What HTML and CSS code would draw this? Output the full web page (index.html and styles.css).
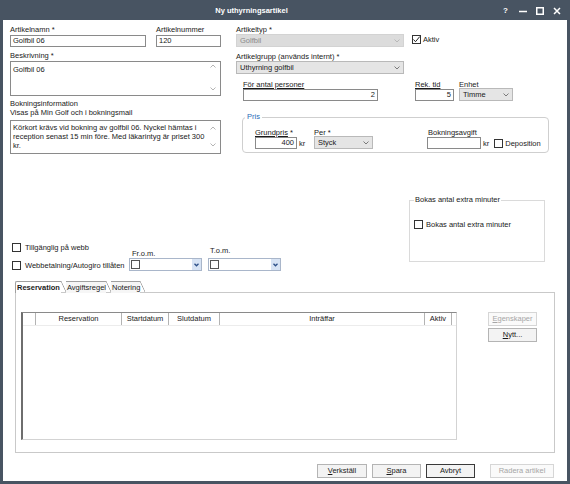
FILE: index.html
```html
<!DOCTYPE html>
<html lang="sv">
<head>
  <meta charset="UTF-8">
  <title>Ny uthyrningsartikel</title>
  <link rel="stylesheet" href="styles.css">
</head>
<body>
<div class="window">
  <div class="titlebar">
    <div class="title">Ny uthyrningsartikel</div>
    <div class="caption">
      <span class="cap cap-help">?</span>
      <span class="cap"><svg width="8" height="8" viewBox="0 0 8 8"><path d="M0 4.5h8"/></svg></span>
      <span class="cap"><svg width="8" height="8" viewBox="0 0 8 8"><rect x="0.75" y="0.75" width="6.5" height="6.5"/></svg></span>
      <span class="cap"><svg width="8" height="8" viewBox="0 0 8 8"><path d="M1 1l6 6M7 1l-6 6"/></svg></span>
    </div>
  </div>

  <div class="frame">
    <div class="top">
      <!-- left column -->
      <div class="col-left">
        <div class="row">
          <div class="field f-name">
            <div class="lbl">Artikelnamn *</div>
            <div class="input">Golfbil 06</div>
          </div>
          <div class="field f-number">
            <div class="lbl">Artikelnummer</div>
            <div class="input">120</div>
          </div>
        </div>
        <div class="field f-desc">
          <div class="lbl">Beskrivning *</div>
          <div class="memo memo-desc">
            <div class="memo-text">Golfbil 06</div>
            <div class="memo-scroll">
              <svg width="6" height="4" viewBox="0 0 6 4"><path d="M0.5 3.5L3 1l2.5 2.5"/></svg>
              <svg width="6" height="4" viewBox="0 0 6 4"><path d="M0.5 0.5L3 3l2.5-2.5"/></svg>
            </div>
          </div>
        </div>
        <div class="info">
          <div>Bokningsinformation</div>
          <div>Visas på Min Golf och i bokningsmail</div>
        </div>
        <div class="memo memo-info">
          <div class="memo-text">Körkort krävs vid bokning av golfbil 06. Nyckel hämtas i<br>reception senast 15 min före. Med läkarintyg är priset 300<br>kr.</div>
          <div class="memo-scroll">
            <svg width="6" height="4" viewBox="0 0 6 4"><path d="M0.5 3.5L3 1l2.5 2.5"/></svg>
            <svg width="6" height="4" viewBox="0 0 6 4"><path d="M0.5 0.5L3 3l2.5-2.5"/></svg>
          </div>
        </div>
      </div>

      <!-- right column -->
      <div class="col-right">
        <div class="row">
          <div class="field f-type">
            <div class="lbl">Artikeltyp *</div>
            <div class="combo disabled">Golfbil<svg width="6" height="4" viewBox="0 0 6 4"><path d="M0.5 0.5L3 3l2.5-2.5"/></svg></div>
          </div>
          <div class="check aktiv">
            <span class="box"><svg width="9" height="9" viewBox="0 0 9 9"><path d="M1.5 4.5l2 2.2L7.8 1.5"/></svg></span>Aktiv
          </div>
        </div>
        <div class="field f-group">
          <div class="lbl">Artikelgrupp (används internt) *</div>
          <div class="combo">Uthyrning golfbil<svg width="6" height="4" viewBox="0 0 6 4"><path d="M0.5 0.5L3 3l2.5-2.5"/></svg></div>
        </div>
        <div class="row persons">
          <div class="field f-count">
            <div class="lbl tight"><u>För antal personer</u></div>
            <div class="input num">2</div>
          </div>
          <div class="field f-rek">
            <div class="lbl tight"><u>Rek. tid</u></div>
            <div class="input num">5</div>
          </div>
          <div class="field f-unit">
            <div class="lbl tight">Enhet</div>
            <div class="combo">Timme<svg width="6" height="4" viewBox="0 0 6 4"><path d="M0.5 0.5L3 3l2.5-2.5"/></svg></div>
          </div>
        </div>
        <fieldset class="pris">
          <legend>Pris</legend>
          <div class="row">
            <div class="field f-base">
              <div class="lbl small"><u>Grundpris</u> *</div>
              <div class="unit-row"><div class="input num">400</div><span class="kr">kr</span></div>
            </div>
            <div class="field f-per">
              <div class="lbl small">Per *</div>
              <div class="combo">Styck<svg width="6" height="4" viewBox="0 0 6 4"><path d="M0.5 0.5L3 3l2.5-2.5"/></svg></div>
            </div>
            <div class="field f-fee">
              <div class="lbl small">Bokningsavgift</div>
              <div class="unit-row">
                <div class="input num"></div><span class="kr">kr</span>
                <div class="check deposit"><span class="box"></span>Deposition</div>
              </div>
            </div>
          </div>
        </fieldset>
      </div>
    </div>

    <div class="middle">
      <div class="web">
        <div class="web-checks">
          <div class="check"><span class="box"></span>Tillgänglig på webb</div>
          <div class="check"><span class="box"></span>Webbetalning/Autogiro tillåten</div>
        </div>
        <div class="date-field">
          <div class="lbl date-from">Fr.o.m.</div>
          <div class="picker"><span class="box"></span><span class="drop"><svg width="5" height="4" viewBox="0 0 5 4"><path d="M0.5 0.8L2.5 2.8l2-2"/></svg></span></div>
        </div>
        <div class="date-field">
          <div class="lbl date-to">T.o.m.</div>
          <div class="picker"><span class="box"></span><span class="drop"><svg width="5" height="4" viewBox="0 0 5 4"><path d="M0.5 0.8L2.5 2.8l2-2"/></svg></span></div>
        </div>
      </div>
      <fieldset class="bokas">
        <legend>Bokas antal extra minuter</legend>
        <div class="check"><span class="box"></span>Bokas antal extra minuter</div>
      </fieldset>
    </div>

    <div class="tabs">
      <div class="tab active">Reservation</div>
      <div class="tab">Avgiftsregel</div>
      <div class="tab">Notering</div>
    </div>
    <div class="panel">
      <div class="grid">
        <div class="grid-head">
          <div class="th"></div>
          <div class="th">Reservation</div>
          <div class="th">Startdatum</div>
          <div class="th">Slutdatum</div>
          <div class="th">Inträffar</div>
          <div class="th">Aktiv</div>
        </div>
      </div>
      <div class="side-buttons">
        <div class="btn disabled"><u>E</u>genskaper</div>
        <div class="btn"><u>N</u>ytt...</div>
      </div>
    </div>

    <div class="actions">
      <div class="btn b-apply"><u>V</u>erkställ</div>
      <div class="btn b-save"><u>S</u>para</div>
      <div class="btn b-cancel default">Avbryt</div>
      <div class="btn b-delete disabled">Radera artikel</div>
    </div>
  </div>
</div>
</body>
</html>
```

FILE: styles.css
```css
* { box-sizing: border-box; }
body {
  margin: 0; background: #fff; color: #1a1a1a;
  font-family: "Liberation Sans", Arial, sans-serif; font-size: 7.5px; line-height: 9px;
}
u { text-decoration: underline; }

.window { width: 570px; height: 484px; display: flex; flex-direction: column; }

/* Title bar */
.titlebar { height: 20px; flex: none; background: #485462; color: #fff; display: flex; align-items: center; }
.title { flex: 1; text-align: center; font-weight: bold; font-size: 7.5px; padding-left: 6px; padding-top: 1px; }
.caption { display: flex; padding-right: 5px; padding-top: 1px; }
.cap { width: 17px; display: flex; justify-content: center; align-items: center; height: 10px; }
.cap svg { stroke: #fff; stroke-width: 1.5; fill: none; }
.cap-help { font-weight: bold; font-size: 8px; }

/* Window body */
.frame {
  flex: 1; background: #fff;
  border: 3px solid #485462; border-top: 0;
  padding: 5px 7px 0 7px;
  display: flex; flex-direction: column;
}

.row { display: flex; }
.lbl { line-height: 10px; white-space: nowrap; }
.lbl.tight { line-height: 9px; }
.lbl.small { line-height: 8px; }

.input {
  height: 12px; border: 1px solid #8a8a8a; background: #fff;
  padding: 0 2px; line-height: 10px; white-space: nowrap;
}
.input.num { text-align: right; }

.combo {
  height: 13px; margin-top: -1px;
  border: 1px solid #b9b9b9; background: #e5e5e5;
  padding: 0 3px; line-height: 11px;
  display: flex; align-items: center; justify-content: space-between;
}
.combo svg { stroke: #7a7a7a; stroke-width: 1; fill: none; }
.combo.disabled { background: #dcdcdc; border-color: #d3d3d3; color: #8b8b8b; }
.combo.disabled svg { stroke: #b8b8b8; }

.check { display: flex; align-items: center; white-space: nowrap; line-height: 9px; }
.box {
  width: 9px; height: 9px; flex: none; border: 1px solid #333; background: #fff;
  display: inline-flex;
}
.box svg { stroke: #222; stroke-width: 1; fill: none; margin: -1px; }

/* Top area */
.top { display: flex; }
.col-left { width: 211px; }
.col-right { width: 313px; margin-left: 15px; }

.f-name { width: 136px; }
.f-number { width: 65px; margin-left: 10px; }
.f-desc { margin-top: 4px; }

.memo { border: 1px solid #8a8a8a; display: flex; }
.memo-text { flex: 1; padding-left: 2px; }
.memo-scroll {
  width: 14px; display: flex; flex-direction: column; align-items: center; justify-content: space-between;
}
.memo-scroll svg { stroke: #b4b4b4; stroke-width: 1; fill: none; }
.memo-desc { height: 35px; }
.memo-desc .memo-text { padding-top: 3px; }
.memo-desc .memo-scroll { padding: 2px 0 4px; }
.info { margin-top: 3px; }
.memo-info { height: 34px; margin-top: 3px; }
.memo-info .memo-text { padding-top: 2px; }
.memo-info .memo-scroll { padding: 5px 0 6px; }

.f-type { width: 168px; }
.aktiv { align-self: flex-end; margin-left: 8px; margin-bottom: 3px; }
.aktiv .box { margin-right: 2px; }
.f-group { width: 168px; margin-top: 5px; }

.persons { margin-top: 6px; padding-left: 7px; }
.f-count { width: 135px; }
.f-rek { width: 39px; margin-left: 37px; }
.f-unit { width: 54px; margin-left: 5px; }

/* Fieldsets */
fieldset { margin: 0; min-width: 0; }
legend { line-height: 10px; }

.pris {
  margin: 11px 0 0 6px; width: 307px;
  border: 1px solid #cfcfcf; border-radius: 4px;
  padding: 7px 0 3px 12px;
}
.pris legend { color: #2b6cb8; padding: 0 2px; margin-left: -10px; }
.unit-row { display: flex; align-items: center; }
.kr { margin-left: 2px; }
.f-base { width: 59px; }
.f-base .input { width: 42px; }
.f-per { width: 59px; }
.f-fee { margin-left: 54px; }
.f-fee .input { width: 54px; }
.f-fee .lbl { padding-left: 1px; }
.deposit { margin-left: 5px; }
.deposit .box { margin-right: 2px; }

/* Middle area */
.middle { display: flex; align-items: flex-end; justify-content: space-between; }
.web { display: flex; align-items: flex-end; }
.web-checks { width: 117px; margin-left: 2px; margin-bottom: 1px; display: flex; flex-direction: column; gap: 9px; }
.web-checks .box { margin-right: 4px; }
.date-field { width: 73px; margin-right: 6px; }
.date-from { line-height: 9px; padding-left: 3px; }
.date-to { line-height: 9px; padding-left: 2px; margin-bottom: 3px; }
.picker {
  height: 13px; border: 1px solid #a9b6ca; background: #fff;
  display: flex; align-items: center; padding-left: 1px;
}
.picker .box { border-color: #555; }
.drop {
  margin-left: auto; width: 9px; height: 11px; background: #d7e3f4;
  display: flex; align-items: center; justify-content: center;
}
.drop svg { stroke: #2c4f88; stroke-width: 1.3; fill: none; }

.bokas {
  width: 136px; margin: 41px 15px 9px 0;
  border: 1px solid #dadada; padding: 0 0 32px 4px;
}
.bokas legend { padding: 0 1px; }
.bokas .check { margin-top: 15px; }
.bokas .box { margin-right: 3px; }

/* Tabs */
.tabs { display: flex; margin: 10px 0 0 5px; height: 11px; position: relative; z-index: 1; }
.tab {
  position: relative; height: 12px; line-height: 11px;
  padding: 0 0 0 1px; margin-right: 5px;
  border-top: 1px solid #a0a0a0; background: #f6f6f6;
}
.tab::after {
  content: ""; position: absolute; top: -1px; right: -5px; width: 5px; bottom: 1px;
  background: linear-gradient(to top right, transparent calc(50% - 0.7px), #a0a0a0 50%, transparent calc(50% + 0.7px));
}
.tab.active { font-weight: bold; background: #fff; border-left: 1px solid #a0a0a0; border-top-left-radius: 2px; padding: 0 1px; }

.panel {
  margin: 0 5px 0 5px; height: 161px;
  border: 1px solid #c9c9c9;
  padding: 19px 0 0 5px;
  display: flex; align-items: flex-start;
}
.grid {
  width: 436px; height: 128px;
  border: 1px solid #d3d3d3; border-left: 2px solid #6e6e6e; border-top-color: #8a8a8a;
}
.grid-head {
  display: grid; grid-template-columns: 13px 86px 47px 51px 205px 27px;
  height: 13px; border-bottom: 1px solid #ececec;
}
.th { border-right: 1px solid #b3b3b3; text-align: center; line-height: 12px; }

.side-buttons { margin-left: 31px; width: 49px; display: flex; flex-direction: column; gap: 2px; }

.btn {
  height: 14px; border: 1px solid #b4b4b4; background: #f3f3f3;
  text-align: center; line-height: 12px; white-space: nowrap;
}
.btn.disabled { color: #a6a6a6; border-color: #d6d6d6; background: #fafafa; }
.btn.default { border-color: #3a3a3a; }

.actions { display: flex; justify-content: flex-end; margin-top: 11px; padding-right: 6px; }
.b-apply { width: 50px; }
.b-save { width: 49px; margin-left: 5px; }
.b-cancel { width: 49px; margin-left: 5px; }
.b-delete { width: 64px; margin-left: 15px; }
```
